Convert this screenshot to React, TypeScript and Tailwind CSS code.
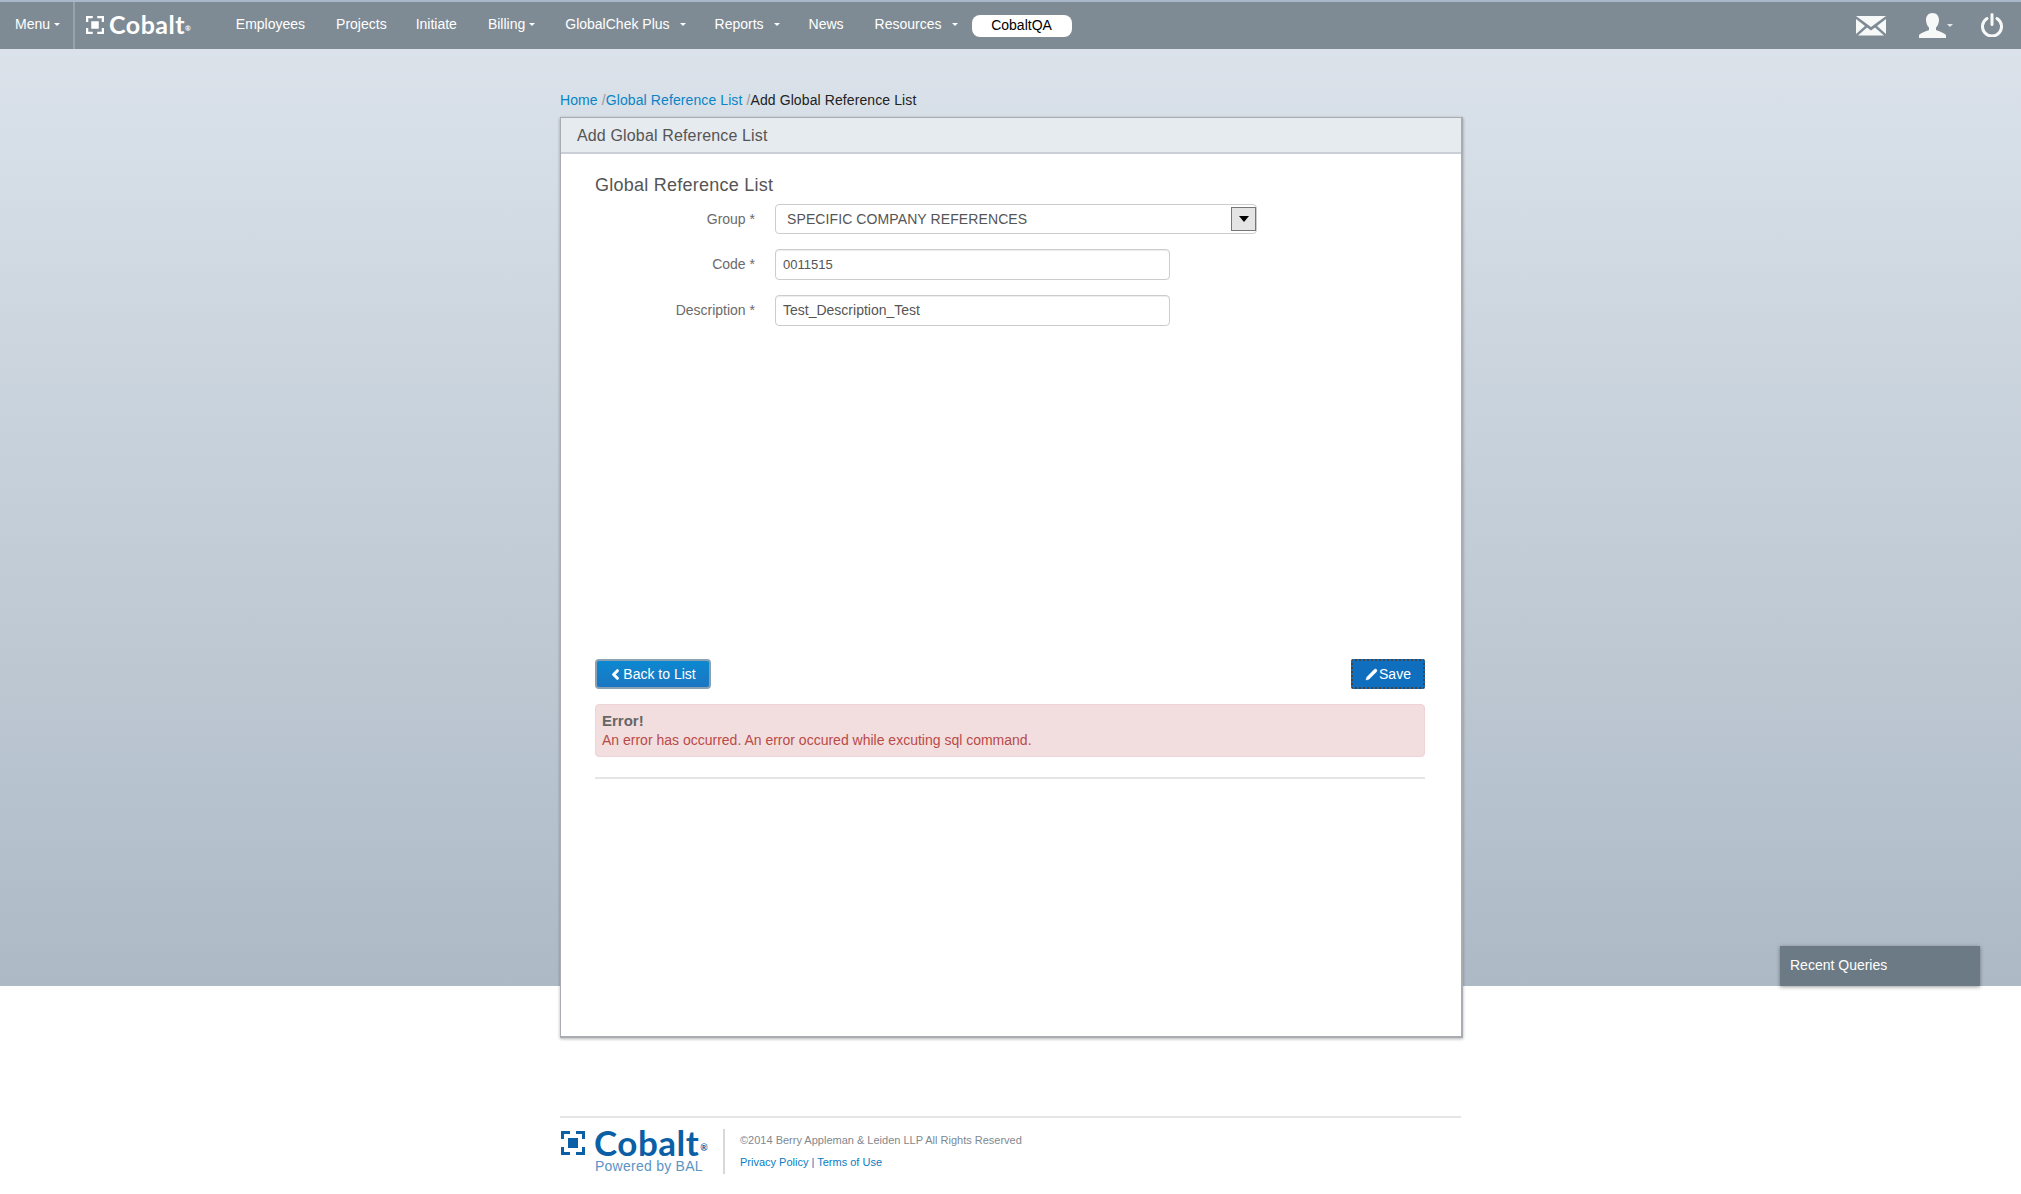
import { ChevronLeft, Pencil } from 'lucide-react';

const font = '[font-family:"Liberation_Sans",Arial,sans-serif]';

function Caret({ className = '' }: { className?: string }) {
  return <span className={`inline-block h-0 w-0 border-x-[3px] border-t-[3px] border-x-transparent border-t-white ${className}`} />;
}

function CobaltMark({ size, color }: { size: number; color: string }) {
  return (
    <svg width={size} height={size} viewBox="0 0 24 24" fill={color}>
      <path d="M0 0h9v3H3v5H0zM15 0h9v8h-3V3h-6zM0 16h3v5h6v3H0zM21 16h3v8h-9v-3h6z" />
      <rect x="7" y="7" width="10" height="10" />
    </svg>
  );
}

function Field({ label, value, textClass }: { label: string; value: string; textClass: string }) {
  return (
    <div className="flex items-center">
      <label className="w-[160px] text-right text-[14px] text-[#6b6b6b]">{label}</label>
      <input
        readOnly
        value={value}
        className={`ml-[20px] h-[31px] w-[395px] rounded-[4px] border border-[#cccccc] bg-white px-[7px] text-[#555555] shadow-[inset_0_1px_1px_rgba(0,0,0,0.075)] outline-none ${textClass}`}
      />
    </div>
  );
}

const navItems = [
  { label: 'Employees', ml: 'ml-[45px]' },
  { label: 'Projects', ml: 'ml-[31px]' },
  { label: 'Initiate', ml: 'ml-[29px]' },
  { label: 'Billing', ml: 'ml-[31px]', caret: 'ml-[4px]' },
  { label: 'GlobalChek Plus', ml: 'ml-[30px]', caret: 'ml-[10px]' },
  { label: 'Reports', ml: 'ml-[29px]', caret: 'ml-[10px]' },
  { label: 'News', ml: 'ml-[29px]' },
  { label: 'Resources', ml: 'ml-[31px]', caret: 'ml-[10px]' },
];

export default function App() {
  return (
    <div className={`relative flex h-[1194px] flex-col overflow-hidden bg-white bg-[linear-gradient(#dde4ec,#adbac6)] bg-[length:100%_986px] bg-no-repeat ${font}`}>
      <header className="flex h-[49px] shrink-0 items-center border-t-2 border-[#a9b8cb] bg-[#7f8b94] text-[14px] text-white">
        <div className="flex h-full w-[75px] items-center border-r-2 border-[#97a2aa] pb-[2px] pl-[15px]">
          Menu<Caret className="ml-[4px]" />
        </div>
        <div className="ml-[11px] flex items-center gap-[5px] pb-[1px]">
          <CobaltMark size={18} color="#ffffff" />
          <span className="flex items-start pb-[1px] text-[25px] font-bold leading-none tracking-[0.5px] [font-family:Lato,sans-serif]">Cobalt<span className="mt-[13px] text-[7px] tracking-normal">®</span></span>
        </div>
        {navItems.map((n) => (
          <div key={n.label} className={`flex items-center pb-[2px] ${n.ml}`}>
            {n.label}
            {n.caret && <Caret className={n.caret} />}
          </div>
        ))}
        <div className="ml-[14px] flex h-[22px] w-[100px] items-center justify-center rounded-[8px] bg-white pb-[1px] text-[14px] text-black">CobaltQA</div>
        <div className="ml-auto flex items-center">
          <svg width="30" height="20" viewBox="0 0 30 20">
            <path fill="#f7f8f8" d="M0 0h30L15 11zM0 3l9 7-9 8zM30 3l-9 7 9 8zM11 11.5l4 3 4-3 9 8H2z" />
          </svg>
          <svg className="ml-[33px]" width="27" height="25" viewBox="0 0 27 25">
            <path fill="#f7f8f8" d="M13.5 0c4 0 6.5 2.8 6.5 7 0 3.300-1.500 6-3 7.500v2.500c3 1.500 8 2.500 10 5l0 3H0v-3c2-2.500 7-3.500 10-5v-2.500C8.500 13 7 10.300 7 7c0-4.200 2.500-7 6.500-7z" />
          </svg>
          <Caret className="ml-[1px] opacity-80" />
          <svg className="mb-[2px] ml-[28px] mr-[18px]" width="22" height="24" viewBox="0 0 22 24" fill="none" stroke="#f7f8f8" strokeWidth="3" strokeLinecap="round">
            <path d="M11 1.500v10" />
            <path d="M6 5.500a9.500 9.500 0 1 0 10 0" />
          </svg>
        </div>
      </header>

      <main className="mx-auto w-[901px] flex-1">
        <nav className="mt-[43px] h-[25px] text-[14px] leading-[16px] tracking-[0.1px] text-[#222222]">
          <span className="text-[#0a84c6]">Home </span>
          <span className="text-[#999999]">/</span>
          <span className="text-[#0a84c6]">Global Reference List </span>
          <span className="text-[#999999]">/</span>Add Global Reference List
        </nav>

        <section className="-mr-[2px] flex h-[921px] flex-col border-r-2 border-b-2 border-l border-t border-[#a9adb1] bg-white shadow-[0_1px_3px_rgba(0,0,0,0.3)]">
          <div className="flex h-[36px] shrink-0 items-center border-b-2 border-[#c9cfd4] bg-[#e6ebef] pl-[16px] pt-[2px] text-[16px] tracking-[0.15px] text-[#555555]">
            Add Global Reference List
          </div>
          <div className="flex flex-1 flex-col pl-[34px] pr-[36px]">
            <h2 className="mt-[21px] text-[18px] leading-[20px] tracking-[0.25px] text-[#555555]">Global Reference List</h2>
            <div className="mt-[9px] flex items-center">
              <label className="w-[160px] text-right text-[14px] text-[#6b6b6b]">Group *</label>
              <div className="ml-[20px] flex h-[30px] w-[482px] items-center justify-between rounded-[4px] border border-[#cccccc] pl-[11px] text-[14px] tracking-[0.1px] text-[#555555]">
                SPECIFIC COMPANY REFERENCES
                <span className="flex h-[24px] w-[25px] items-center justify-center border border-[#777777] bg-[#e4e4e4]">
                  <span className="h-0 w-0 border-x-[5px] border-t-[6px] border-x-transparent border-t-black" />
                </span>
              </div>
            </div>
            <div className="mt-[15px]"><Field label="Code *" value="0011515" textClass="text-[13px]" /></div>
            <div className="mt-[15px]"><Field label="Description *" value="Test_Description_Test" textClass="pb-[1px] text-[14px]" /></div>

            <div className="mt-[333px] flex items-center justify-between">
              <button className="flex h-[30px] w-[116px] items-center justify-center rounded-[4px] border-2 border-[#8aa0b3] bg-gradient-to-b from-[#0a88d0] to-[#1a76c2] text-[14px] text-white">
                <ChevronLeft size={15} strokeWidth={5} className="-ml-[2px]" />Back to List
              </button>
              <button className="flex h-[30px] w-[74px] items-center justify-center rounded-[2px] border-2 border-dotted border-[#444444] bg-[#0f6fbe] text-[14px] text-white">
                <Pencil size={13} fill="#ffffff" strokeWidth={1} className="mr-[1px]" />Save
              </button>
            </div>

            <div className="mt-[15px] h-[53px] rounded-[4px] border border-[#eed3d7] bg-[#f2dede] px-[6px] pt-[6px]">
              <div className="text-[15px] font-bold leading-[20px] text-[#666666]">Error!</div>
              <div className="text-[14px] leading-[18px] text-[#b94a48]">An error has occurred. An error occured while excuting sql command.</div>
            </div>
            <hr className="mt-[20px] border-t-2 border-[#e5e5e5]" />
          </div>
        </section>

        <footer className="mt-[78px] flex border-t-2 border-[#e5e5e5] pt-[11px]">
          <div className="h-[45px] w-[165px] border-r-2 border-[#d8d8d8] pl-[1px]">
            <div className="flex h-[28px] items-center">
              <CobaltMark size={24} color="#0b5fa5" />
              <span className="mb-[2px] ml-[9px] flex h-[28px] items-end text-[35px] font-bold leading-[28px] tracking-[0.5px] text-[#0b5fa5] [font-family:Lato,sans-serif]">Cobalt<span className="mb-[4px] ml-[1px] text-[9px] leading-none tracking-normal">®</span></span>
            </div>
            <div className="ml-[34px] mt-[2px] text-[14px] leading-[15px] tracking-[0.25px] text-[#5b93c4]">Powered by BAL</div>
          </div>
          <div className="ml-[15px] text-[11px] leading-[22px] text-[#808890]">
            <div>©2014 Berry Appleman &amp; Leiden LLP All Rights Reserved</div>
            <div className="text-[#0a7cc4]">Privacy Policy | Terms of Use</div>
          </div>
        </footer>
      </main>

      <div className="absolute left-[1780px] top-[946px] flex h-[40px] w-[200px] items-center bg-[#6c7a85] pb-[1px] pl-[10px] text-[14px] text-white shadow-[0_1px_4px_rgba(0,0,0,0.4)]">
        Recent Queries
      </div>
    </div>
  );
}
